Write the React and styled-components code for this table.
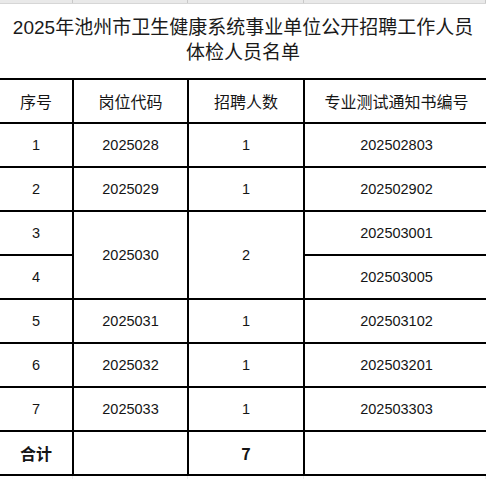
import React from "react";
import styled, { createGlobalStyle } from "styled-components";

const Global = createGlobalStyle`
  html, body { margin: 0; padding: 0; background: #ffffff; }
  body { font-family: "Liberation Sans", "Noto Sans CJK SC", sans-serif; color: #111; }
`;

const Page = styled.div`
  width: 486px;
  height: 479px;
  overflow: hidden;
  background: #fff;
  display: flex;
  flex-direction: column;
`;

const HeaderStrip = styled.div`
  height: 3px;
  display: grid;
  grid-template-columns: 73px 115px 116px 1fr;
  background: #e9e9e9;
  border-bottom: 1px solid #d6d6d6;
`;

const StripCell = styled.div`
  border-right: 1px solid #c9c9c9;
`;

const Title = styled.h1`
  margin: 0;
  height: 74px;
  display: flex;
  flex-direction: column;
  align-items: center;
  justify-content: center;
  font-family: "Liberation Sans", "Noto Sans CJK SC", sans-serif;
  font-weight: 400;
  font-size: 19px;
  line-height: 25px;
  color: #1a1a1a;
  padding-bottom: 2px;
  box-sizing: border-box;
`;

const Grid = styled.div`
  display: grid;
  grid-template-columns: 72px 113px 114px 183px;
  grid-auto-rows: 42px;
  gap: 2px;
  padding: 2px 0;
  background: #000;
  width: 488px;
`;

const Cell = styled.div`
  background: #fff;
  display: flex;
  align-items: center;
  justify-content: center;
  font-family: ${(p) =>
    p.$head || p.$bold
      ? '"Noto Sans CJK SC", sans-serif'
      : '"Liberation Sans", "Noto Sans CJK SC", sans-serif'};
  font-size: ${(p) => (p.$head || p.$bold ? "16px" : "14.5px")};
  font-weight: ${(p) => (p.$bold ? 700 : 400)};
  color: #151515;
  grid-row: ${(p) => (p.$span ? `span ${p.$span}` : "auto")};
  box-shadow: ${(p) => (p.$selected ? "inset -1px 0 0 #1f7a58" : "none")};
`;

const Footer = styled.div`
  flex: 1;
  display: grid;
  grid-template-columns: 73px 115px 116px 1fr;
`;

const FooterCell = styled.div`
  border-right: 1px solid #ececec;
`;

const rows = [
  ["1", "2025028", "1", "202502803"],
  ["2", "2025029", "1", "202502902", true],
];

export default function App() {
  return (
    <Page>
      <Global />
      <HeaderStrip>
        <StripCell />
        <StripCell />
        <StripCell />
        <StripCell />
      </HeaderStrip>
      <Title>
        <span>2025年池州市卫生健康系统事业单位公开招聘工作人员</span>
        <span>体检人员名单</span>
      </Title>
      <Grid>
        <Cell $head>序号</Cell>
        <Cell $head>岗位代码</Cell>
        <Cell $head>招聘人数</Cell>
        <Cell $head>专业测试通知书编号</Cell>

        {rows.map((r) => (
          <React.Fragment key={r[0]}>
            <Cell>{r[0]}</Cell>
            <Cell>{r[1]}</Cell>
            <Cell>{r[2]}</Cell>
            <Cell $selected={r[4]}>{r[3]}</Cell>
          </React.Fragment>
        ))}

        <Cell>3</Cell>
        <Cell $span={2}>2025030</Cell>
        <Cell $span={2}>2</Cell>
        <Cell>202503001</Cell>
        <Cell>4</Cell>
        <Cell>202503005</Cell>

        <Cell>5</Cell>
        <Cell>2025031</Cell>
        <Cell>1</Cell>
        <Cell>202503102</Cell>

        <Cell>6</Cell>
        <Cell>2025032</Cell>
        <Cell>1</Cell>
        <Cell>202503201</Cell>

        <Cell>7</Cell>
        <Cell>2025033</Cell>
        <Cell>1</Cell>
        <Cell>202503303</Cell>

        <Cell $bold>合计</Cell>
        <Cell />
        <Cell $bold>7</Cell>
        <Cell />
      </Grid>
      <Footer>
        <FooterCell />
        <FooterCell />
        <FooterCell />
        <FooterCell />
      </Footer>
    </Page>
  );
}
